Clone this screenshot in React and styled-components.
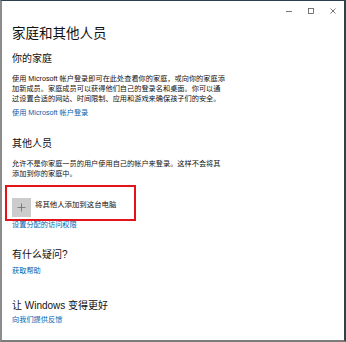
import React from "react";
import styled, { createGlobalStyle } from "styled-components";

const GlobalStyle = createGlobalStyle`
  html, body {
    margin: 0;
    padding: 0;
    background: #fff;
  }
  body {
    font-family: "Liberation Sans", "Noto Sans CJK SC", sans-serif;
  }
`;

const Window = styled.div`
  box-sizing: border-box;
  width: 346px;
  height: 342px;
  background: #fff;
  border-top: 1px solid #2e4150;
  border-right: 2px solid #2e4150;
  border-bottom: 2px solid #7c7c7c;
  border-left: 2px solid #8c8c8c;
  overflow: hidden;
`;

const TitleBar = styled.div`
  display: flex;
  justify-content: flex-end;
  height: 19px;
`;

const Control = styled.div`
  display: flex;
  align-items: center;
  justify-content: center;
  width: 22px;
  height: 19px;
  color: #555;
`;

const Content = styled.div`
  padding: 0 10px;
  color: #111;
`;

const Title = styled.h1`
  margin: 6px 0 0;
  font-size: 13.5px;
  line-height: 16px;
  font-weight: 400;
`;

const Heading = styled.h2`
  margin: ${(p) => p.$top}px 0 0;
  font-size: 10px;
  line-height: 14px;
  font-weight: 400;
`;

const Text = styled.p`
  margin: ${(p) => p.$top}px 0 0;
  font-size: 7.2px;
  line-height: 10px;
  color: #111;
`;

const Link = styled.a`
  display: block;
  margin-top: ${(p) => p.$top}px;
  font-size: 7.2px;
  line-height: 10px;
  color: #0063b1;
  text-decoration: none;
`;

const AddRow = styled.div`
  position: relative;
  display: flex;
  align-items: flex-start;
  gap: 4px;
  margin-top: 19px;
  height: 19px;

  &::after {
    content: "";
    position: absolute;
    top: -13px;
    left: -7px;
    width: 131px;
    height: 36px;
    box-sizing: border-box;
    border: 2px solid #e3121b;
  }
`;

const PlusTile = styled.div`
  display: flex;
  align-items: center;
  justify-content: center;
  width: 19px;
  height: 19px;
  background: #cccccc;
`;

const AddLabel = styled.span`
  margin-top: 2px;
  font-size: 7.4px;
  line-height: 10px;
  color: #111;
`;

const Minimize = () => (
  <svg width="8" height="8" viewBox="0 0 8 8">
    <line x1="1" y1="4.5" x2="7" y2="4.5" stroke="currentColor" strokeWidth="0.8" />
  </svg>
);

const Maximize = () => (
  <svg width="8" height="8" viewBox="0 0 8 8">
    <rect x="1.5" y="1.5" width="5" height="5" fill="none" stroke="currentColor" strokeWidth="0.8" />
  </svg>
);

const Close = () => (
  <svg width="8" height="8" viewBox="0 0 8 8">
    <path d="M1.5 1.5 L6.5 6.5 M6.5 1.5 L1.5 6.5" stroke="currentColor" strokeWidth="0.8" />
  </svg>
);

const Plus = () => (
  <svg width="9" height="9" viewBox="0 0 9 9">
    <path d="M4.5 0.5 V8.5 M0.5 4.5 H8.5" stroke="#6b6b6b" strokeWidth="0.8" />
  </svg>
);

const App = () => {
  return (
    <>
      <GlobalStyle />
      <Window>
        <TitleBar>
          <Control><Minimize /></Control>
          <Control><Maximize /></Control>
          <Control><Close /></Control>
        </TitleBar>
        <Content>
          <Title>家庭和其他人员</Title>

          <Heading $top={9.5}>你的家庭</Heading>
          <Text $top={8.5}>
            使用 Microsoft 帐户登录即可在此处查看你的家庭，或向你的家庭添<br />
            加新成员。家庭成员可以获得他们自己的登录名和桌面。你可以通<br />
            过设置合适的网站、时间限制、应用和游戏来确保孩子们的安全。
          </Text>
          <Link $top={3.7}>使用 Microsoft 帐户登录</Link>

          <Heading $top={19.3}>其他人员</Heading>
          <Text $top={8}>
            允许不是你家庭一员的用户使用自己的帐户来登录。这样不会将其<br />
            添加到你的家庭中。
          </Text>
          <AddRow>
            <PlusTile><Plus /></PlusTile>
            <AddLabel>将其他人添加到这台电脑</AddLabel>
          </AddRow>
          <Link $top={3}>设置分配的访问权限</Link>

          <Heading $top={18}>有什么疑问?</Heading>
          <Link $top={3.7}>获取帮助</Link>

          <Heading $top={23.3}>让 Windows 变得更好</Heading>
          <Link $top={2}>向我们提供反馈</Link>
        </Content>
      </Window>
    </>
  );
};

export default App;
